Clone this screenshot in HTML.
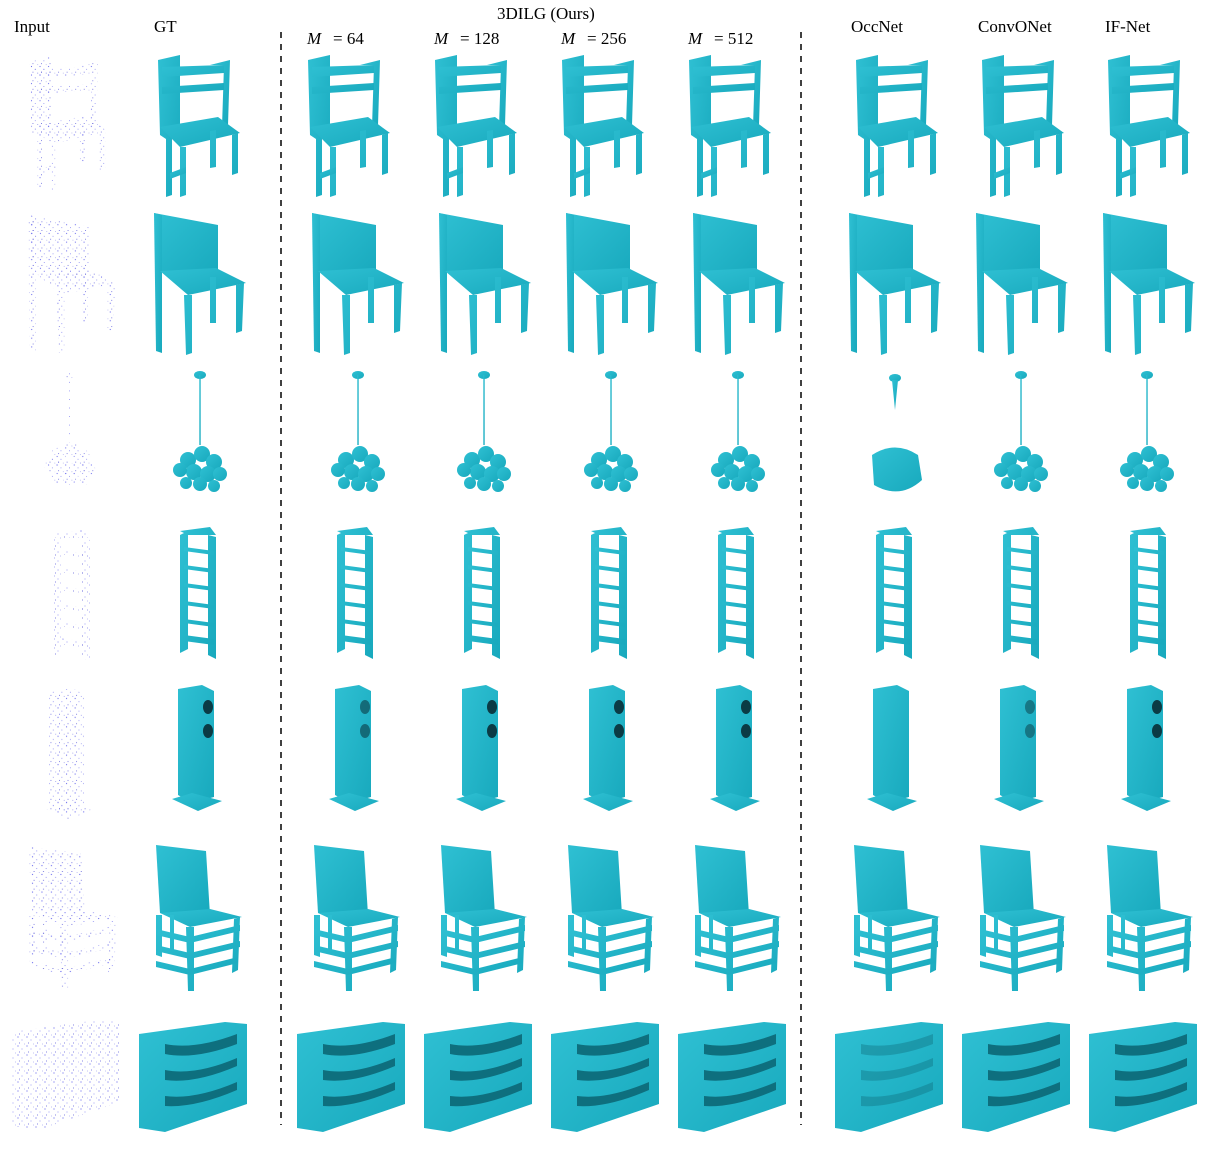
<!DOCTYPE html>
<html><head><meta charset="utf-8"><style>
body{margin:0;background:#fff;width:1221px;height:1157px;overflow:hidden;font-family:"Liberation Serif",serif}
svg{position:absolute;left:0;top:0}
</style></head><body>
<svg width="1221" height="1157" viewBox="0 0 1221 1157">
<defs>
<pattern id="dots" width="9" height="9" patternUnits="userSpaceOnUse">
<circle cx="1" cy="1" r="0.6" fill="#3a3ae8"/><circle cx="5" cy="4" r="0.5" fill="#5555ee"/><circle cx="2.5" cy="7" r="0.5" fill="#2222cc"/><circle cx="7.5" cy="8" r="0.4" fill="#4444dd"/>
</pattern>
<linearGradient id="tg" x1="0" y1="0" x2="1" y2="1"><stop offset="0" stop-color="#2fc0d3"/><stop offset="1" stop-color="#18a9bd"/></linearGradient>
<g id="chair1">
<path d="M8 5 L30 0 L30 80 L22 84 L22 140 L16 142 L16 84 L10 80 Z"/>
<path d="M60 10 L80 5 L78 70 L72 72 L74 10 Z"/>
<path d="M12 12 L74 10 L74 18 L12 22 Z M12 32 L74 28 L74 35 L12 39 Z"/>
<path d="M10 72 L68 62 L90 78 L30 92 Z"/>
<path d="M30 92 L36 92 L36 140 L30 142 Z M82 80 L88 78 L88 118 L82 120 Z M60 76 L66 75 L66 112 L60 113 Z"/>
<path d="M20 118 L36 112 L36 118 L20 124 Z"/>
</g>
<g id="chair2">
<path d="M6 0 L70 12 L70 65 L12 58 Z"/>
<path d="M6 0 L14 2 L14 140 L8 138 Z"/>
<path d="M12 58 L68 55 L98 70 L40 82 Z"/>
<path d="M36 82 L44 82 L44 140 L38 142 Z M88 72 L96 70 L94 118 L88 120 Z M62 64 L68 64 L68 110 L62 110 Z"/>
</g>
<g id="lamp">
<ellipse cx="50" cy="5" rx="6" ry="4"/><rect x="49.3" y="5" width="1.4" height="70"/>
<circle cx="38" cy="90" r="8"/><circle cx="52" cy="84" r="8"/><circle cx="64" cy="92" r="8"/><circle cx="44" cy="102" r="8"/><circle cx="58" cy="104" r="8"/><circle cx="30" cy="100" r="7"/><circle cx="70" cy="104" r="7"/><circle cx="50" cy="114" r="7"/><circle cx="36" cy="113" r="6"/><circle cx="64" cy="116" r="6"/>
</g>
<g id="ladder">
<path d="M10 8 L18 4 L18 122 L10 126 Z M38 8 L46 10 L46 132 L38 128 Z M10 4 L40 0 L46 8 L18 8 Z"/>
<path d="M14 20 L44 24 L44 28 L14 24 Z M14 38 L44 42 L44 46 L14 42 Z M14 56 L44 60 L44 64 L14 60 Z M14 74 L44 78 L44 82 L14 78 Z M14 92 L44 96 L44 100 L14 96 Z M14 108 L44 112 L44 118 L14 114 Z"/>
</g>
<g id="speaker">
<path d="M10 4 L34 0 L46 6 L46 112 L24 118 L10 110 Z"/>
<path d="M4 114 L24 108 L54 116 L30 126 Z"/>
</g>
<g id="holes" fill="#0b3b45"><ellipse cx="40" cy="22" rx="5" ry="7"/><ellipse cx="40" cy="46" rx="5" ry="7"/></g>
<g id="chair6">
<path d="M6 0 L56 6 L60 70 L10 68 Z"/>
<path d="M10 68 L60 64 L92 72 L40 82 Z"/>
<path d="M6 70 L12 70 L12 112 L6 110 Z M36 82 L44 82 L44 146 L38 146 Z M84 74 L90 72 L88 125 L82 128 Z M20 70 L24 70 L24 108 L20 108 Z"/>
<path d="M6 84 L40 92 L90 80 L90 86 L40 98 L6 90 Z M6 100 L40 108 L90 96 L90 102 L40 114 L6 106 Z M6 116 L40 124 L88 112 L88 118 L40 130 L6 122 Z"/>
</g>
<g id="shelf">
<path d="M4 14 L90 2 L112 4 L112 84 L30 112 L4 108 Z"/>
</g>
<g id="shelfin" fill="#0e6f7e">
<path d="M30 24 Q60 30 102 14 L102 24 Q60 40 30 34 Z M30 50 Q60 56 102 38 L102 46 Q60 64 30 60 Z M30 76 Q60 80 102 62 L102 70 Q60 88 30 86 Z"/>
</g>
</defs>

<g font-size="17" fill="#000">
<text x="14" y="32">Input</text>
<text x="154" y="32">GT</text>
<text x="497" y="19">3DILG (Ours)</text>
<text x="307" y="44" font-style="italic">M</text><text x="333" y="44">= 64</text>
<text x="434" y="44" font-style="italic">M</text><text x="460" y="44">= 128</text>
<text x="561" y="44" font-style="italic">M</text><text x="587" y="44">= 256</text>
<text x="688" y="44" font-style="italic">M</text><text x="714" y="44">= 512</text>
<text x="851" y="32">OccNet</text>
<text x="978" y="32">ConvONet</text>
<text x="1105" y="32">IF-Net</text>
</g>
<line x1="281" y1="32" x2="281" y2="1125" stroke="#000" stroke-width="1.5" stroke-dasharray="6,6"/>
<line x1="801" y1="32" x2="801" y2="1125" stroke="#000" stroke-width="1.5" stroke-dasharray="6,6"/>

<g fill="url(#dots)" opacity="0.75">
<use href="#chair1" transform="translate(22,57) scale(0.95)"/>
<use href="#chair2" transform="translate(22,215) scale(0.97)"/>
<use href="#lamp" transform="translate(22,370) scale(0.95)"/>
<use href="#ladder" transform="translate(44,530)"/>
<use href="#speaker" transform="translate(40,688) scale(0.95,1.05)"/>
<use href="#chair6" transform="translate(22,847) scale(1.05,0.98)"/>
<use href="#shelf" transform="translate(8,1018)"/>
</g>

<g fill="url(#tg)">
<use href="#chair1" transform="translate(150,55)"/>
<use href="#chair1" transform="translate(300,55)"/>
<use href="#chair1" transform="translate(427,55)"/>
<use href="#chair1" transform="translate(554,55)"/>
<use href="#chair1" transform="translate(681,55)"/>
<use href="#chair1" transform="translate(848,55)"/>
<use href="#chair1" transform="translate(974,55)"/>
<use href="#chair1" transform="translate(1100,55)"/>

<use href="#chair2" transform="translate(148,213)"/>
<use href="#chair2" transform="translate(306,213)"/>
<use href="#chair2" transform="translate(433,213)"/>
<use href="#chair2" transform="translate(560,213)"/>
<use href="#chair2" transform="translate(687,213)"/>
<use href="#chair2" transform="translate(843,213)"/>
<use href="#chair2" transform="translate(970,213)"/>
<use href="#chair2" transform="translate(1097,213)"/>

<use href="#lamp" transform="translate(150,370)"/>
<use href="#lamp" transform="translate(308,370)"/>
<use href="#lamp" transform="translate(434,370)"/>
<use href="#lamp" transform="translate(561,370)"/>
<use href="#lamp" transform="translate(688,370)"/>
<ellipse cx="895" cy="378" rx="6" ry="4"/><path d="M892 380 L898 380 L895 410 Z"/>
<path d="M872 455 Q895 440 918 455 L922 480 Q900 500 874 485 Z"/>
<use href="#lamp" transform="translate(971,370)"/>
<use href="#lamp" transform="translate(1097,370)"/>

<use href="#ladder" transform="translate(170,527)"/>
<use href="#ladder" transform="translate(327,527)"/>
<use href="#ladder" transform="translate(454,527)"/>
<use href="#ladder" transform="translate(581,527)"/>
<use href="#ladder" transform="translate(708,527)"/>
<use href="#ladder" transform="translate(866,527)"/>
<use href="#ladder" transform="translate(993,527)"/>
<use href="#ladder" transform="translate(1120,527)"/>

<use href="#speaker" transform="translate(168,685)"/>
<use href="#speaker" transform="translate(325,685)"/>
<use href="#speaker" transform="translate(452,685)"/>
<use href="#speaker" transform="translate(579,685)"/>
<use href="#speaker" transform="translate(706,685)"/>
<use href="#speaker" transform="translate(863,685)"/>
<use href="#speaker" transform="translate(990,685)"/>
<use href="#speaker" transform="translate(1117,685)"/>

<use href="#chair6" transform="translate(150,845)"/>
<use href="#chair6" transform="translate(308,845)"/>
<use href="#chair6" transform="translate(435,845)"/>
<use href="#chair6" transform="translate(562,845)"/>
<use href="#chair6" transform="translate(689,845)"/>
<use href="#chair6" transform="translate(848,845)"/>
<use href="#chair6" transform="translate(974,845)"/>
<use href="#chair6" transform="translate(1101,845)"/>

<use href="#shelf" transform="translate(135,1020)"/>
<use href="#shelf" transform="translate(293,1020)"/>
<use href="#shelf" transform="translate(420,1020)"/>
<use href="#shelf" transform="translate(547,1020)"/>
<use href="#shelf" transform="translate(674,1020)"/>
<use href="#shelf" transform="translate(831,1020)"/>
<use href="#shelf" transform="translate(958,1020)"/>
<use href="#shelf" transform="translate(1085,1020)"/>
</g>
<g>
<use href="#holes" transform="translate(168,685)"/>
<use href="#holes" transform="translate(325,685)" opacity="0.6"/>
<use href="#holes" transform="translate(452,685)"/>
<use href="#holes" transform="translate(579,685)"/>
<use href="#holes" transform="translate(706,685)"/>
<use href="#holes" transform="translate(990,685)" opacity="0.5"/>
<use href="#holes" transform="translate(1117,685)"/>
<use href="#shelfin" transform="translate(135,1020)"/>
<use href="#shelfin" transform="translate(293,1020)"/>
<use href="#shelfin" transform="translate(420,1020)"/>
<use href="#shelfin" transform="translate(547,1020)"/>
<use href="#shelfin" transform="translate(674,1020)"/>
<use href="#shelfin" transform="translate(831,1020)" opacity="0.4"/>
<use href="#shelfin" transform="translate(958,1020)"/>
<use href="#shelfin" transform="translate(1085,1020)"/>
</g>
</svg>
</body></html>
